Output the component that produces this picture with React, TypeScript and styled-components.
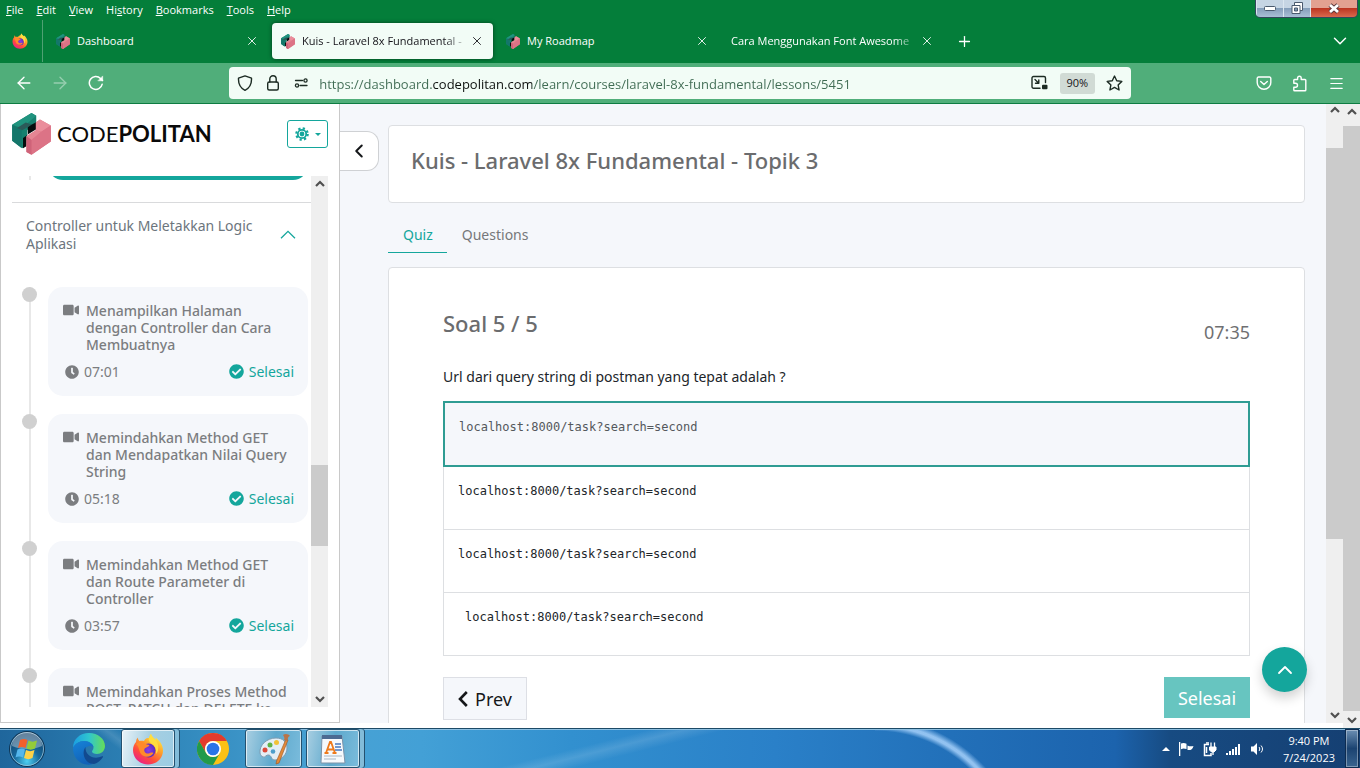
import React from "react";
import styled, { createGlobalStyle, css } from "styled-components";
import { ChevronDown, ChevronLeft, ChevronUp, Plus, X, ArrowLeft, ArrowRight, Menu } from "lucide-react";
import { FaCheckCircle, FaClock, FaVideo } from "react-icons/fa";

const TEAL = "#14a69c";
const UI_FONT = '"Open Sans", "Noto Sans", sans-serif';
const PAGE_FONT = '"Noto Sans", "Open Sans", sans-serif';

const GlobalStyle = createGlobalStyle`
  * { box-sizing: border-box; }
  body { margin: 0; background: #fff; font-family: ${PAGE_FONT}; overflow: hidden; }
  button { font: inherit; color: inherit; border: 0; background: none; padding: 0; cursor: pointer; }
  h1, h2, h3, p, ul { margin: 0; padding: 0; }
  svg { display: block; flex: none; }
`;

const Screen = styled.div`
  display: flex;
  flex-direction: column;
  height: 100vh;
`;

/* ---------- browser chrome ---------- */

const MenuBar = styled.nav`
  display: flex;
  gap: 13px;
  height: 20px;
  flex: none;
  padding-left: 6px;
  background: #047e3a;
  color: #fff;
  font: 11px/20px ${UI_FONT};
`;

const WindowControls = styled.div`
  display: flex;
  height: 18px;
  margin: 0 2px 0 auto;
  border: 1px solid #33475c;
  border-top: 0;
  border-radius: 0 0 5px 5px;
  overflow: hidden;
`;

const WindowButton = styled.button<{ $close?: boolean }>`
  display: grid;
  place-items: center;
  width: ${(p) => (p.$close ? 47 : 27)}px;
  border-left: 1px solid #dbe6f0;
  background: ${(p) =>
    p.$close
      ? "linear-gradient(#e2a191 0 45%, #bd3622 50%, #d9694e)"
      : "linear-gradient(#c6d5e4 0 45%, #869fbb 50%, #a9bfd6)"};
`;

const TabStrip = styled.div`
  display: flex;
  align-items: center;
  height: 43px;
  flex: none;
  padding-bottom: 1px;
  background: #047e3a;
  color: #fff;
`;

const PinnedTab = styled.button`
  display: grid;
  place-items: center;
  align-self: stretch;
  width: 43px;
  padding-right: 3px;
  border-right: 1px solid #4fa173;
`;

const Tabs = styled.div`
  display: flex;
  flex: 0 1 896px;
  gap: 4px;
  margin: 0 3px 0 4px;
  min-width: 0;
`;

const Tab = styled.div<{ $active?: boolean }>`
  display: flex;
  align-items: center;
  flex: 1;
  min-width: 0;
  height: 36px;
  padding: 0 9px;
  border-radius: 4px;
  ${(p) => p.$active && css`
    background: #f2fcf6;
    color: #15141a;
    box-shadow: 0 0 4px rgba(0, 0, 0, 0.5);
  `}
`;

const TabTitle = styled.button<{ $fade?: boolean }>`
  display: flex;
  align-items: center;
  gap: 7px;
  flex: 1;
  min-width: 0;
  overflow: hidden;
  white-space: nowrap;
  text-align: left;
  font: 11px/20px ${UI_FONT};
  ${(p) => p.$fade && css`mask-image: linear-gradient(to left, transparent, #000 26px);`}
`;

const IconButton = styled.button<{ $size?: number; $dim?: boolean }>`
  display: grid;
  place-items: center;
  flex: none;
  width: ${(p) => p.$size ?? 36}px;
  height: ${(p) => p.$size ?? 36}px;
  opacity: ${(p) => (p.$dim ? 0.4 : 1)};
`;

const TabListButton = styled(IconButton)`
  margin: 0 2px 0 auto;
`;

const Toolbar = styled.div`
  display: flex;
  align-items: center;
  height: 41px;
  flex: none;
  border-bottom: 1px solid #0d7c42;
  background: #50ae7a;
  color: #fff;
`;

const ToolGroup = styled.div`
  display: flex;
  padding: 0 6px;
`;

const FlexSpace = styled.div`
  flex: 110 1 0;
`;

const AddressBar = styled.div`
  display: flex;
  align-items: center;
  flex: 902 1 0;
  height: 32px;
  padding: 0 4px 0 2px;
  border-radius: 4px;
  background: #f2fcf6;
  color: #1c2b23;
`;

const AddressInput = styled.input`
  flex: 1;
  min-width: 0;
  margin-left: 4px;
  padding: 2px 0 0;
  border: 0;
  outline: 0;
  font: 13px/20px ${UI_FONT};
  color: transparent;
  background: linear-gradient(to right, #3f6b53 113px, #0c100e 113px 213px, #3f6b53 213px);
  background-clip: text;
`;

const ZoomLevel = styled.button`
  width: 35px;
  height: 21px;
  margin: 0 8px 0 11px;
  border-radius: 3px;
  background: #d1dbd5;
  color: #15141a;
  font: 11px/20px ${UI_FONT};
`;

/* ---------- page ---------- */

const Viewport = styled.div`
  display: flex;
  flex: 1;
  min-height: 0;
`;

const Page = styled.div`
  display: flex;
  flex: 1;
  min-width: 0;
  margin-bottom: 5px;
  background: #f5f7fb;
`;

const Sidebar = styled.aside`
  display: flex;
  flex-direction: column;
  width: 340px;
  flex: none;
  padding: 0 11px 15px;
  border: 1px solid #c9c9c9;
  border-top: 0;
  background: #fff;
`;

const SidebarHeader = styled.header`
  display: flex;
  align-items: center;
  gap: 7px;
  height: 60px;
  margin-bottom: 12px;
  flex: none;
`;

const Brand = styled.a`
  display: flex;
  align-items: center;
  gap: 6px;
  margin-right: auto;
  color: #0a0a0a;
  text-decoration: none;
  font: 22px/30px Lato, sans-serif;
  b { font-weight: 700; }
`;

const ThemeButton = styled.button`
  display: flex;
  align-items: center;
  justify-content: center;
  gap: 6px;
  width: 41px;
  height: 28px;
  border: 1px solid ${TEAL};
  border-radius: 3px;
  color: ${TEAL};
`;

const SidebarScroll = styled.div`
  display: flex;
  flex: 1;
  min-height: 0;
`;

const LessonPane = styled.div`
  flex: 1;
  min-width: 0;
  overflow: hidden;
`;

const PreviousLesson = styled.div`
  display: flex;
  align-items: flex-end;
  height: 4px;
  margin: 0 3px 22px 17px;
  overflow: hidden;
  border-left: 2px solid #e8e8e8;
`;

const ActiveLesson = styled.div`
  flex: 1;
  flex-shrink: 0;
  height: 110px;
  margin-left: 17px;
  border-radius: 15px;
  background: ${TEAL};
`;

const Topic = styled.button`
  display: flex;
  align-items: center;
  justify-content: space-between;
  width: 100%;
  padding: 14px 15px 16px 14px;
  border-top: 1px solid #d9dadc;
  color: #6c757d;
  text-align: left;
  font-size: 14px;
  line-height: 18px;
  span { max-width: 240px; }
  svg { color: ${TEAL}; }
`;

const LessonList = styled.ul`
  margin-top: 18px;
  list-style: none;
`;

const LessonItem = styled.li`
  display: flex;
  gap: 11px;
  padding-left: 10px;
`;

const Rail = styled.div`
  width: 15px;
  background: linear-gradient(#e8e8e8, #e8e8e8) center / 2px 100% no-repeat;
  &::before {
    content: "";
    display: block;
    height: 15px;
    border-radius: 50%;
    background: #d0d0d0;
  }
`;

const LessonCard = styled.a`
  display: block;
  flex: 1;
  height: 109px;
  margin: 0 3px 18px 0;
  padding: 15px 14px 0 15px;
  border-radius: 15px;
  background: #f5f7fb;
  color: #7b7d80;
  text-decoration: none;
  font-size: 14px;
  line-height: 17px;
`;

const LessonTitle = styled.h3`
  display: flex;
  gap: 7px;
  height: 51px;
  font-size: 14px;
  font-weight: 500;
`;

const LessonMeta = styled.div`
  display: flex;
  align-items: center;
  gap: 5px;
  margin-top: 10px;
  padding-left: 2px;
`;

const Done = styled.span`
  display: flex;
  align-items: center;
  gap: 5px;
  margin-left: auto;
  color: ${TEAL};
`;

const ScrollTrack = styled.div<{ $top?: number; $bottom?: number }>`
  display: flex;
  flex-direction: column;
  align-items: center;
  width: 17px;
  flex: none;
  padding: ${(p) => p.$top ?? 2}px 0 ${(p) => p.$bottom ?? 2}px;
  background: #efefef;
  color: #505050;
`;

const ScrollThumb = styled.div<{ $before: number; $size: number; $after: number }>`
  display: flex;
  flex-direction: column;
  width: 100%;
  flex: 1;
  &::before { content: ""; flex: ${(p) => p.$before}; }
  &::after { content: ""; flex: ${(p) => p.$after}; }
  i { flex: ${(p) => p.$size}; background: #cbcbcb; }
`;

const CollapseButton = styled.button`
  display: grid;
  place-items: center;
  width: 39px;
  height: 40px;
  flex: none;
  margin: 27px 9px 0 0;
  border: 1px solid #cfd1d4;
  border-left: 0;
  border-radius: 0 12px 12px 0;
  background: #fff;
  color: #15171a;
`;

const Main = styled.main`
  flex: 1;
  min-width: 0;
  margin-right: 21px;
  padding-top: 21px;
  overflow: hidden;
`;

const TitleCard = styled.section`
  height: 78px;
  padding: 19px 22px;
  border: 1px solid #dddfe2;
  border-radius: 4px;
  background: #fff;
`;

const Heading = styled.h1`
  color: #6b6c6e;
  font-size: 22px;
  font-weight: 500;
  line-height: 30px;
`;

const PageTabs = styled.div`
  display: flex;
  margin: 14px 0;
`;

const PageTab = styled.button<{ $active?: boolean }>`
  height: 36px;
  padding: 0 14px 0 15px;
  border-bottom: 1px solid ${(p) => (p.$active ? TEAL : "transparent")};
  color: ${(p) => (p.$active ? TEAL : "#76777a")};
  font-size: 14px;
`;

const QuizCard = styled.section`
  padding: 40px 54px;
  border: 1px solid #dddfe2;
  border-radius: 4px;
  background: #fff;
`;

const QuizHeader = styled.header`
  display: flex;
  justify-content: space-between;
  height: 59px;
`;

const Timer = styled.time`
  margin-top: 11px;
  color: #6f7072;
  font-size: 18px;
  line-height: 26px;
`;

const Question = styled.p`
  margin-bottom: 14px;
  color: #212529;
  font-size: 14px;
  line-height: 20px;
`;

const Options = styled.div`
  display: flex;
  flex-direction: column;
`;

const Option = styled.button<{ $selected?: boolean; $indent?: boolean }>`
  display: flex;
  height: 63px;
  padding: 15px ${(p) => (p.$indent ? 21 : 14)}px;
  border: 1px solid #dddfe2;
  border-top: 0;
  color: #212529;
  font: 12px/18px "DejaVu Sans Mono", monospace;
  ${(p) => p.$selected && css`
    height: 66px;
    border: 2px solid #2f9c93;
    background: #f5f7fb;
    color: #54585c;
  `}
`;

const Actions = styled.div`
  display: flex;
  justify-content: space-between;
  align-items: flex-start;
  margin-top: 21px;
`;

const PrevButton = styled.button`
  display: flex;
  align-items: center;
  justify-content: center;
  gap: 7px;
  width: 84px;
  height: 43px;
  border: 1px solid #dddfe5;
  background: #f5f7fb;
  color: #15171a;
  font-size: 18px;
`;

const FinishButton = styled.button`
  width: 86px;
  height: 41px;
  background: #67c5c0;
  color: #fff;
  font-size: 18px;
`;

const BackToTop = styled.button`
  position: fixed;
  right: 53px;
  bottom: 76px;
  display: grid;
  place-items: center;
  width: 45px;
  height: 45px;
  border-radius: 50%;
  background: ${TEAL};
  color: #fff;
  box-shadow: 0 6px 12px rgba(0, 0, 0, 0.18);
`;

/* ---------- taskbar ---------- */

const Taskbar = styled.footer`
  display: flex;
  align-items: stretch;
  height: 40px;
  flex: none;
  border-top: 1px solid #1d4a66;
  box-shadow: inset 0 1px 0 #8cc0e2;
  background:
    radial-gradient(circle at 0 138px, transparent 136px, rgba(165, 208, 250, 0.85) 141px 143px, transparent 149px) 875px 0 / 160px 100% no-repeat,
    linear-gradient(37deg, transparent 0 43%, rgba(255, 255, 255, 0.12) 48%, transparent 53%) 40px 0 / 190px 100% no-repeat,
    linear-gradient(166deg, transparent 45%, rgba(255, 255, 255, 0.13) 52%, transparent 60%) 420px 0 / 360px 100% no-repeat,
    linear-gradient(to right, #1f669c, #2f86ba 12%, #48a2d4 24%, #43a0d6 31%, #3290cf 42%, #2a80c8 57%, #2270b9 70%, #1c63ad 82%, #174b82 86%, #153f72 100%);
`;

const StartButton = styled.button`
  display: grid;
  place-items: center;
  width: 54px;
`;

const TaskButton = styled.button<{ $state?: "active" | "open"; $stacked?: boolean }>`
  display: grid;
  place-items: center;
  width: 57px;
  ${(p) => p.$state && css`
    border: 1px solid #24516f;
    border-radius: 3px;
    background: ${p.$state === "active"
      ? "linear-gradient(100deg, #e9f3f8, #a6cfe2 50%, #9ccce3)"
      : "linear-gradient(100deg, #a9cfe2, #5ea9cd 50%, #7bbcdc)"};
    box-shadow: inset 0 0 0 1px rgba(255, 255, 255, 0.65);
  `}
  ${(p) => p.$stacked && css`
    width: 54px;
    margin-right: 5px;
    box-shadow: inset 0 0 0 1px rgba(255, 255, 255, 0.65), 4px 0 0 #82bcd9, 5px 0 0 #24516f;
  `}
`;

const TaskButtons = styled.div`
  display: flex;
  gap: 4px;
  padding-left: 6px;
`;

const Tray = styled.div`
  display: flex;
  align-items: center;
  gap: 8px;
  margin-left: auto;
  color: #fff;
`;

const Clock = styled.time`
  margin: 0 2px 0 9px;
  text-align: center;
  font: 11px/17px ${UI_FONT};
`;

const ShowDesktop = styled.button`
  align-self: stretch;
  width: 14px;
  margin-right: 1px;
  border: 1px solid #0d2b50;
  background: linear-gradient(#6c8fb3, #1b4371 50%, #3a648f);
  box-shadow: inset 0 0 0 1px rgba(255, 255, 255, 0.35);
`;

/* ---------- drawings ---------- */

const CodepolitanMark = ({ width, height }: { width: number; height: number }) => (
  <svg width={width} height={height} viewBox="0 0 114 124" aria-hidden="true">
    <path d="M0 35 57 0 71 8V34L45 50 42 96 30 104 0 82Z" fill="#17806f" />
    <path d="M0 35 57 0 71 8 28 44Z" fill="#20947f" />
    <path d="M0 35 28 50V104L0 82Z" fill="#14766a" />
    <path d="M14 44 40 28 58 34 30 51Z" fill="#2b5a59" />
    <path d="M46 42 58 34 71 27 71 48 42 66V98L32 104V74L46 64Z" fill="#060c0d" />
    <path d="M70 28 82 19 114 37V84L57 123 42 115V69L70 51Z" fill="#dd7485" />
    <path d="M70 28 82 19 114 37 86 55 70 51Z" fill="#ea8d9b" />
    <path d="M42 69 70 51 86 55 57 80Z" fill="#e58593" />
    <path d="M57 80 86 55 114 37V84L57 123Z" fill="#dc7386" />
    <path d="M57 123V80L42 69V115Z" fill="#cf6379" />
  </svg>
);

const FirefoxLogo = ({ size, id }: { size: number; id: string }) => (
  <svg width={size} height={size} viewBox="0 0 32 32" aria-hidden="true">
    <defs>
      <linearGradient id={`${id}-fire`} x1="0.8" y1="0.05" x2="0.2" y2="0.95">
        <stop offset="0" stopColor="#fff04a" />
        <stop offset="0.35" stopColor="#ffa229" />
        <stop offset="0.7" stopColor="#ff4a3d" />
        <stop offset="1" stopColor="#e8208a" />
      </linearGradient>
      <radialGradient id={`${id}-core`}>
        <stop offset="0" stopColor="#8b3ee8" />
        <stop offset="1" stopColor="#5a2cc0" />
      </radialGradient>
    </defs>
    <path d="M19 1c1 3 3 4 5 6 0-1-.3-2-.5-2.500C28 8 31 12 31 17.500 31 25.500 24.500 31.500 16 31.500S1 25 1 17c0-3 1-6 3-8 0-1.500.5-3 1.500-4.500C6 6 6.500 7 7.500 8c2-.5 3-.5 4.500 0 1-2.500 3-3 5-3 .5-1.500 1-3 2-4Z" fill={`url(#${id}-fire)`} />
    <circle cx="16.500" cy="17.500" r="7" fill={`url(#${id}-core)`} />
    <path d="M4 11c3-3 7-2.500 9-.5 1 1 3 1 4.500 1.500-1 2.500-4 2-5 4-1 2.500 1.500 5 4 4.500 2-.5 3-1.500 5-.5-2 4-8 5-11.500 2S8 14.500 4 11Z" fill="#ff8a2b" />
    <path d="M19 1c1 4 6 5 7 11 .6 4 0 7-2 9 .5-5-1-8-4-10-2-1.500-4-3-3-6 .5-1.500 1-3 2-4Z" fill="#ffdd3f" />
  </svg>
);

const EdgeLogo = () => (
  <svg width="32" height="32" viewBox="0 0 32 32" aria-hidden="true">
    <defs>
      <linearGradient id="edge-top" x1="0" y1="0.4" x2="1" y2="0.4">
        <stop offset="0" stopColor="#1b9de2" />
        <stop offset="0.5" stopColor="#2fc6cf" />
        <stop offset="1" stopColor="#66dd58" />
      </linearGradient>
      <linearGradient id="edge-low" x1="0" y1="0" x2="0.4" y2="1">
        <stop offset="0" stopColor="#1683d8" />
        <stop offset="1" stopColor="#1262b8" />
      </linearGradient>
    </defs>
    <path d="M0 15C0 6 7 0 16 0s16 6 16 13c0 5-4 8-8 8-3 0-5-1-5-2.500 0-1 1.500-1.500 1.500-4C20.500 11 16 8 11 8 6 8 2 11 0 15Z" fill="url(#edge-top)" />
    <path d="M0 15c2-4 6-7 11-7 5 0 9 3 9.500 6C18 12 12 13 11 18c-1 6 4 11 9 13C10 34 0 27 0 15Z" fill="url(#edge-low)" />
    <path d="M12.500 14C8 20 12 31 21 31c4-1 7-4 9-7 .3-.6-.2-1-.8-.7C21 27 12 23 12.500 14Z" fill="#124a8f" />
  </svg>
);

const ChromeLogo = () => (
  <svg width="32" height="32" viewBox="0 0 32 32" aria-hidden="true">
    <circle cx="16" cy="16" r="16" fill="#fbc116" />
    <path d="M2.140 8A16 16 0 0 1 29.860 8H16A8 8 0 0 0 9.070 20Z" fill="#e33b2e" />
    <path d="M2.140 8A16 16 0 0 0 16 32L22.930 20A8 8 0 0 1 9.070 20Z" fill="#229a4b" />
    <circle cx="16" cy="16" r="8" fill="#fff" />
    <circle cx="16" cy="16" r="6.300" fill="#2a74e8" />
  </svg>
);

const WindowsOrb = () => (
  <svg width="38" height="38" viewBox="0 0 38 38" aria-hidden="true">
    <defs>
      <radialGradient id="orb" cx="0.5" cy="0.85" r="0.8">
        <stop offset="0" stopColor="#4fd0f2" />
        <stop offset="0.45" stopColor="#176a9d" />
        <stop offset="1" stopColor="#123e66" />
      </radialGradient>
    </defs>
    <circle cx="19" cy="19" r="17.500" fill="url(#orb)" stroke="#0e3453" />
    <circle cx="19" cy="19" r="16.500" fill="none" stroke="#a8d0e4" strokeOpacity="0.7" />
    <path d="M4 16a15 14 0 0 1 30 0c-8 4-22 4-30 0Z" fill="#fff" opacity="0.35" />
    <path d="M12 10c3-1.500 5-1.500 7.500 0l-2 8c-2.500-1.500-5-1.500-7.500 0Z" fill="#f2602c" />
    <path d="M20.500 10.500c3 1.500 5 1.500 8.500 0l-2 8c-3 1.500-5.500 1.500-8.500 0Z" fill="#93cb3a" />
    <path d="M9.500 19.500c3-1.500 5-1.500 7.500 0l-2 8c-2.500-1.500-5-1.500-7.500 0Z" fill="#55b7ec" />
    <path d="M18 20c3 1.500 5 1.500 8.500 0l-2 8c-3 1.500-5.500 1.500-8.500 0Z" fill="#fdd248" />
  </svg>
);

const PaintLogo = () => (
  <svg width="32" height="32" viewBox="0 0 32 32" aria-hidden="true">
    <path d="M2 20C1 12 9 5 18 5c7 0 11 4 11 10s-5 12-12 12c-4 0-3-4-6-5-3-.7-4 3-6 2-1.500-.7-2.700-2-3-4Z" fill="#e3eef5" stroke="#7f9db2" />
    <circle cx="7" cy="17" r="2.500" fill="#dc4a3a" />
    <circle cx="12" cy="12" r="2.500" fill="#5eb24a" />
    <circle cx="18.500" cy="9.500" r="2.500" fill="#f1c237" />
    <circle cx="15" cy="18.500" r="2.300" fill="#4d9ecb" />
    <path d="m28 6 2 1-9 23-3 1 .5-3Z" fill="#e2893a" stroke="#9c5620" strokeWidth="0.600" />
    <path d="M25 2c2-2 6-1 7 1-2 0-2 3-3 5l-3-1c1-2 0-3-1-5Z" fill="#ba7448" />
  </svg>
);

const WordPadLogo = () => (
  <svg width="30" height="32" viewBox="0 0 30 32" aria-hidden="true">
    <path d="M4 3h20l3 27H3Z" fill="#f6f9fc" stroke="#7c93a9" />
    <path d="M4 2h20v4H4Z" fill="#4c6a91" />
    <path d="M17 11h6M17 14h6M17 17h7" stroke="#4b79bd" strokeWidth="1.500" />
    <path d="M6 23h18M6 26h12" stroke="#a9b6c4" />
    <path d="m8 20 4-11h1l4 11M9.500 16.500h6M6.500 20h4M14.500 20h4" fill="none" stroke="#ee7a1c" strokeWidth="1.800" />
  </svg>
);

const line = { fill: "none", stroke: "currentColor", strokeLinecap: "round", strokeLinejoin: "round" } as const;

const Reload = () => (
  <svg width="16" height="16" viewBox="0 0 16 16" {...line} strokeWidth="1.500">
    <path d="M14.200 9.200A6.500 6.500 0 1 1 12.500 3.400L14.500 5.500" />
    <path d="M14.700 1.300V5.800H10.200Z" fill="currentColor" strokeWidth="0.500" />
  </svg>
);
const Shield = () => (
  <svg width="16" height="16" viewBox="0 0 16 16" {...line} strokeWidth="1.400">
    <path d="M8 .9 14.500 3.200C14.800 9 12.500 13 8 15.300 3.500 13 1.200 9 1.500 3.200Z" />
  </svg>
);
const Lock = () => (
  <svg width="16" height="16" viewBox="0 0 16 16" {...line} strokeWidth="1.400">
    <rect x="2.700" y="7" width="10.600" height="8" rx="1.500" />
    <path d="M4.800 7V4a3.200 3.200 0 0 1 6.400 0v3" />
  </svg>
);
const Permissions = () => (
  <svg width="16" height="16" viewBox="0 0 16 16" {...line} strokeWidth="1.300">
    <path d="M2.500 5.500H9.500M7 10.500H14" />
    <circle cx="12.500" cy="5.500" r="1.600" />
    <circle cx="4" cy="10.500" r="1.600" />
  </svg>
);
const PictureInPicture = () => (
  <svg width="17" height="16" viewBox="0 0 17 16" {...line} strokeWidth="1.400">
    <path d="M9 13.300H2.500a1.500 1.500 0 0 1-1.500-1.500V3a1.500 1.500 0 0 1 1.500-1.500H13A1.500 1.500 0 0 1 14.500 3V7.500" />
    <path d="M4 4.500 7.500 8M7.800 5V8.300H4.500" />
    <rect x="11" y="9.700" width="5.500" height="4.500" rx="1" fill="currentColor" stroke="none" />
  </svg>
);
const Star = () => (
  <svg width="17" height="17" viewBox="0 0 16 16" {...line} strokeWidth="1.300">
    <path d="m8 1 2.100 4.400 4.800.6-3.500 3.300.9 4.800L8 11.700l-4.300 2.400.9-4.800L1.100 6l4.800-.6Z" />
  </svg>
);
const Pocket = () => (
  <svg width="16" height="16" viewBox="0 0 16 16" {...line} strokeWidth="1.400">
    <path d="M2.500 2h11A1.300 1.300 0 0 1 14.800 3.300V7.500a6.800 6.800 0 0 1-13.600 0V3.300A1.300 1.300 0 0 1 2.500 2Z" />
    <path d="m4.700 6.500 3.300 3 3.300-3" />
  </svg>
);
const Puzzle = () => (
  <svg width="16" height="17" viewBox="0 0 16 17" {...line} strokeWidth="1.400">
    <path d="M1.800 8.200V5.300A.8.800 0 0 1 2.600 4.500H5.600V3a1.800 1.800 0 0 1 3.600 0V4.500H13a.8.800 0 0 1 .8.800V15a.8.800 0 0 1-.8.800H2.600a.8.800 0 0 1-.8-.8V12.200H3.500a1.900 1.900 0 0 0 0-4Z" />
  </svg>
);
const Gear = () => (
  <svg width="14" height="14" viewBox="0 0 14 14" fill="none" stroke="currentColor">
    <circle cx="7" cy="7" r="5.700" strokeWidth="2.200" strokeDasharray="2.240 2.240" />
    <circle cx="7" cy="7" r="4.200" strokeWidth="1.800" />
    <circle cx="7" cy="7" r="2.400" fill="currentColor" stroke="none" />
  </svg>
);
const Caret = ({ up }: { up?: boolean }) => (
  <svg width={up ? 8 : 6} height={up ? 4 : 3} viewBox="0 0 6 3" fill="currentColor">
    <path d={up ? "M0 3 3 0l3 3Z" : "M0 0h6L3 3Z"} />
  </svg>
);
const WideChevron = () => (
  <svg width="16" height="11" viewBox="0 0 16 11" fill="none" stroke="currentColor" strokeWidth="1.300">
    <path d="M1 8.300 8 1.300l7 7" />
  </svg>
);
const PrevChevron = () => (
  <svg width="10" height="16" viewBox="0 0 10 16" fill="none" stroke="currentColor" strokeWidth="2.600">
    <path d="M8.800 1 2 8l6.800 7" />
  </svg>
);
const ScrollArrow = ({ down }: { down?: boolean }) => (
  <svg width="10" height="12" viewBox="0 0 10 12" fill="none" stroke="currentColor" strokeWidth="2.200">
    <path d={down ? "m1 4 4 4 4-4" : "m1 8 4-4 4 4"} />
  </svg>
);
const FlagIcon = () => (
  <svg width="16" height="16" viewBox="0 0 16 16" fill="#fff">
    <path d="M1 1h1.300v14H1ZM3 2.500c2-1 4-.5 5.500.2V8C6 7.200 5 7.200 3 8.200ZM9.500 4.500c2 1 4 1 6 .5-1 3.500-3 4.500-6 4Z" />
  </svg>
);
const PowerIcon = () => (
  <svg width="16" height="16" viewBox="0 0 16 16" fill="none" stroke="#fff">
    <path d="M7 3.500H2.500V14.500H9V12" strokeWidth="1.500" />
    <path d="M4 2h3M4.500 6v6" strokeWidth="1.500" />
    <path d="M9 1.500V6M12.500 1.500V6M11 11v3" strokeWidth="1.300" />
    <path d="M7.500 6h6.500v3l-2 2H9.500l-2-2Z" fill="#fff" />
  </svg>
);
const SignalIcon = () => (
  <svg width="16" height="16" viewBox="0 0 16 16" fill="#fff">
    <path d="M0 12h2v2H0ZM3 10h2v4H3ZM6 8h2v6H6ZM9 6h2v8H9ZM12 3h2v11h-2Z" />
  </svg>
);
const VolumeIcon = () => (
  <svg width="16" height="16" viewBox="0 0 16 16" fill="#fff">
    <path d="M1 5.500h2.500L7 2v12L3.500 10.500H1Z" />
    <path d="M9 6c1 1 1 3 0 4M11 4.500c2 2 2 5 0 7" fill="none" stroke="#fff" />
  </svg>
);

/* ---------- data ---------- */

const menus: [string, string, string][] = [
  ["", "F", "ile"], ["", "E", "dit"], ["", "V", "iew"], ["Hi", "s", "tory"],
  ["", "B", "ookmarks"], ["", "T", "ools"], ["", "H", "elp"],
];

const browserTabs = [
  { title: "Dashboard", icon: true },
  { title: "Kuis - Laravel 8x Fundamental -", icon: true, active: true, fade: true },
  { title: "My Roadmap", icon: true },
  { title: "Cara Menggunakan Font Awesome", fade: true },
];

const lessons = [
  { title: "Menampilkan Halaman dengan Controller dan Cara Membuatnya", time: "07:01" },
  { title: "Memindahkan Method GET dan Mendapatkan Nilai Query String", time: "05:18" },
  { title: "Memindahkan Method GET dan Route Parameter di Controller", time: "03:57" },
  { title: "Memindahkan Proses Method POST, PATCH dan DELETE ke", time: "" },
];

const answer = "localhost:8000/task?search=second";

export default function App() {
  return (
    <Screen>
      <GlobalStyle />
      <MenuBar aria-label="Menu">
        {menus.map(([a, key, b]) => (
          <button key={b}>{a}<u>{key}</u>{b}</button>
        ))}
        <WindowControls>
          <WindowButton aria-label="Minimize">
            <svg width="12" height="5"><rect x="0.500" y="0.500" width="11" height="4" rx="1" fill="#fff" stroke="#4a5a6e" /></svg>
          </WindowButton>
          <WindowButton aria-label="Restore">
            <svg width="13" height="13" fill="#fff" stroke="#4a5a6e">
              <path d="M3.500.5h8v8h-8Z" /><path d="M1 3.500h8v8H1Z" /><path d="M3.500 6h3v3h-3Z" fill="#7f97b2" />
            </svg>
          </WindowButton>
          <WindowButton $close aria-label="Close">
            <svg width="12" height="11" viewBox="0 0 12 11" fill="none">
              <path d="m2 2 8 7M10 2 2 9" stroke="#5c3a3c" strokeWidth="4.600" />
              <path d="m2 2 8 7M10 2 2 9" stroke="#fff" strokeWidth="2.800" />
            </svg>
          </WindowButton>
        </WindowControls>
      </MenuBar>

      <TabStrip>
        <PinnedTab aria-label="Firefox"><FirefoxLogo size={16} id="tab" /></PinnedTab>
        <Tabs>
          {browserTabs.map((t) => (
            <Tab key={t.title} $active={t.active}>
              <TabTitle $fade={t.fade}>
                {t.icon && <CodepolitanMark width={14} height={15} />}
                <span>{t.title}</span>
              </TabTitle>
              <IconButton $size={14} aria-label={`Close ${t.title}`}><X size={14} strokeWidth={1.500} /></IconButton>
            </Tab>
          ))}
        </Tabs>
        <IconButton aria-label="New tab"><Plus size={17} strokeWidth={1.800} /></IconButton>
        <TabListButton aria-label="List all tabs"><ChevronDown size={22} strokeWidth={1.600} /></TabListButton>
      </TabStrip>

      <Toolbar>
        <ToolGroup>
          <IconButton aria-label="Back"><ArrowLeft size={20} strokeWidth={1.600} /></IconButton>
          <IconButton $dim aria-label="Forward"><ArrowRight size={20} strokeWidth={1.600} /></IconButton>
          <IconButton aria-label="Reload"><Reload /></IconButton>
        </ToolGroup>
        <FlexSpace />
        <AddressBar>
          <IconButton $size={28} aria-label="Tracking protection"><Shield /></IconButton>
          <IconButton $size={28} aria-label="Site security"><Lock /></IconButton>
          <IconButton $size={28} aria-label="Permissions"><Permissions /></IconButton>
          <AddressInput
            aria-label="Address"
            defaultValue="https://dashboard.codepolitan.com/learn/courses/laravel-8x-fundamental/lessons/5451"
          />
          <IconButton $size={18} aria-label="Picture in picture"><PictureInPicture /></IconButton>
          <ZoomLevel>90%</ZoomLevel>
          <IconButton $size={24} aria-label="Bookmark"><Star /></IconButton>
        </AddressBar>
        <FlexSpace />
        <ToolGroup>
          <IconButton aria-label="Pocket"><Pocket /></IconButton>
          <IconButton aria-label="Extensions"><Puzzle /></IconButton>
          <IconButton aria-label="Application menu"><Menu size={17} strokeWidth={1.700} /></IconButton>
        </ToolGroup>
      </Toolbar>

      <Viewport>
        <Page>
          <Sidebar>
            <SidebarHeader>
              <Brand href="#">
                <CodepolitanMark width={39} height={42} />
                <span>CODE<b>POLITAN</b></span>
              </Brand>
              <ThemeButton aria-label="Theme"><Gear /><Caret /></ThemeButton>
            </SidebarHeader>
            <SidebarScroll>
              <LessonPane>
                <PreviousLesson><ActiveLesson /></PreviousLesson>
                <Topic>
                  <span>Controller untuk Meletakkan Logic Aplikasi</span>
                  <WideChevron />
                </Topic>
                <LessonList>
                  {lessons.map((l) => (
                    <LessonItem key={l.title}>
                      <Rail />
                      <LessonCard href="#">
                        <LessonTitle><FaVideo size={16} /><span>{l.title}</span></LessonTitle>
                        {l.time && (
                          <LessonMeta>
                            <FaClock size={14} />{l.time}
                            <Done><FaCheckCircle size={15} />Selesai</Done>
                          </LessonMeta>
                        )}
                      </LessonCard>
                    </LessonItem>
                  ))}
                </LessonList>
              </LessonPane>
              <ScrollTrack>
                <ScrollArrow />
                <ScrollThumb $before={275} $size={81} $after={147}><i /></ScrollThumb>
                <ScrollArrow down />
              </ScrollTrack>
            </SidebarScroll>
          </Sidebar>

          <CollapseButton aria-label="Collapse sidebar"><ChevronLeft size={22} strokeWidth={2.200} /></CollapseButton>

          <Main>
            <TitleCard><Heading>Kuis - Laravel 8x Fundamental - Topik 3</Heading></TitleCard>
            <PageTabs role="tablist">
              <PageTab role="tab" aria-selected $active>Quiz</PageTab>
              <PageTab role="tab">Questions</PageTab>
            </PageTabs>
            <QuizCard>
              <QuizHeader>
                <Heading as="h2">Soal 5 / 5</Heading>
                <Timer>07:35</Timer>
              </QuizHeader>
              <Question>Url dari query string di postman yang tepat adalah ?</Question>
              <Options>
                <Option $selected>{answer}</Option>
                <Option>{answer}</Option>
                <Option>{answer}</Option>
                <Option $indent>{answer}</Option>
              </Options>
              <Actions>
                <PrevButton><PrevChevron />Prev</PrevButton>
                <FinishButton>Selesai</FinishButton>
              </Actions>
            </QuizCard>
          </Main>
          <ScrollTrack $top={0} $bottom={2}>
            <ScrollArrow />
            <ScrollThumb $before={32} $size={391} $after={170}><i /></ScrollThumb>
            <ScrollArrow down />
          </ScrollTrack>
        </Page>
        <ScrollTrack $top={2} $bottom={2}>
          <ScrollArrow />
          <ScrollThumb $before={8} $size={585} $after={3}><i /></ScrollThumb>
          <ScrollArrow down />
        </ScrollTrack>
        <BackToTop aria-label="Back to top"><ChevronUp size={24} strokeWidth={1.800} /></BackToTop>
      </Viewport>

      <Taskbar>
        <StartButton aria-label="Start"><WindowsOrb /></StartButton>
        <TaskButtons>
          <TaskButton aria-label="Edge"><EdgeLogo /></TaskButton>
          <TaskButton $state="active" $stacked aria-label="Firefox"><FirefoxLogo size={32} id="task" /></TaskButton>
          <TaskButton aria-label="Chrome"><ChromeLogo /></TaskButton>
          <TaskButton $state="open" aria-label="Paint"><PaintLogo /></TaskButton>
          <TaskButton $state="open" $stacked aria-label="WordPad"><WordPadLogo /></TaskButton>
        </TaskButtons>
        <Tray>
          <Caret up />
          <FlagIcon />
          <PowerIcon />
          <SignalIcon />
          <VolumeIcon />
          <Clock>9:40 PM<br />7/24/2023</Clock>
          <ShowDesktop aria-label="Show desktop" />
        </Tray>
      </Taskbar>
    </Screen>
  );
}
